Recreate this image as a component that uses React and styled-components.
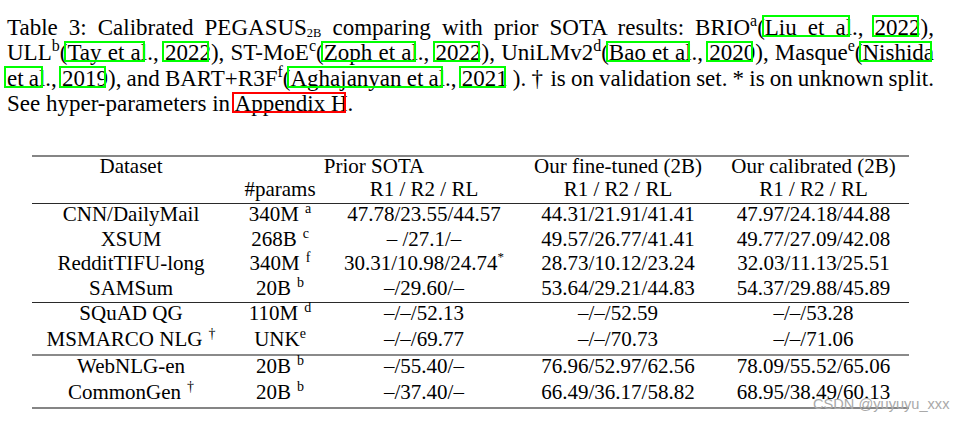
import React from "react";
import styled, { createGlobalStyle } from "styled-components";

const Global = createGlobalStyle`
  html, body {
    margin: 0;
    padding: 0;
    background: #fff;
  }
  body {
    font-family: "Liberation Serif", "Times New Roman", serif;
    color: #000;
  }
`;

const Page = styled.div`
  position: relative;
  width: 967px;
  height: 422px;
  padding: 14.5px 0 0 7px;
  box-sizing: border-box;
  overflow: hidden;
`;

const Caption = styled.div`
  width: 927px;
  font-size: 23px;
  line-height: 25.5px;
`;

const Line = styled.div`
  text-align: ${(p) => (p.last ? "left" : "justify")};
  text-align-last: ${(p) => (p.last ? "left" : "justify")};
  word-spacing: ${(p) => p.squeeze || 0}px;
`;

const Sup = styled.sup`
  font-size: ${(p) => p.size || 16}px;
  line-height: 0;
  vertical-align: ${(p) => p.raise || 9}px;
  word-spacing: 0;
  margin-left: ${(p) => p.gap || 0}px;
`;

const Sub = styled.sub`
  font-size: 12.5px;
  line-height: 0;
  vertical-align: -2px;
`;

const Cite = styled.span`
  position: relative;
  &::after {
    content: "";
    position: absolute;
    left: -3px;
    right: 2px;
    top: 0.5px;
    bottom: 3px;
    border: 2px solid ${(p) => (p.red ? "#ff0000" : "#00ff00")};
    pointer-events: none;
  }
`;

const Table = styled.table`
  margin: 38.5px 0 0 25px;
  width: 877px;
  table-layout: fixed;
  border-collapse: collapse;
  font-size: 21px;
  border-bottom: 2px solid #858585;
`;

const Head = styled.thead`
  border-top: 2px solid #858585;
  border-bottom: 1px solid #2a2a2a;
  td {
    line-height: 19px;
    padding: 0 0 4px;
  }
`;

const Section = styled.tbody`
  border-top: ${(p) => (p.soft ? "2px solid #8a8a8a" : "1px solid #2a2a2a")};
  td {
    line-height: 21px;
    padding: 0 0 ${(p) => p.pad || 3.5}px;
  }
`;

const Cell = styled.td`
  text-align: center;
  white-space: nowrap;
  vertical-align: top;
`;

const Mark = styled.span`
  position: absolute;
  left: 813px;
  top: 396px;
  font-family: "Liberation Sans", Arial, sans-serif;
  font-size: 14.6px;
  color: #a9a9a9;
  white-space: nowrap;
`;

const rows = [
  {
    rule: "hard",
    pad: 3.5,
    items: [
      ["CNN/DailyMail", "340M", "a", 6, "47.78/23.55/44.57", "", "44.31/21.91/41.41", "47.97/24.18/44.88"],
      ["XSUM", "268B", "c", 6, "– /27.1/–", "", "49.57/26.77/41.41", "49.77/27.09/42.08"],
      ["RedditTIFU-long", "340M", "f", 6, "30.31/10.98/24.74", "*", "28.73/10.12/23.24", "32.03/11.13/25.51"],
      ["SAMSum", "20B", "b", 6, "–/29.60/–", "", "53.64/29.21/44.83", "54.37/29.88/45.89"],
    ],
  },
  {
    rule: "hard",
    pad: 4.5,
    items: [
      ["SQuAD QG", "110M", "d", 6, "–/–/52.13", "", "–/–/52.59", "–/–/53.28"],
      ["MSMARCO NLG", "UNK", "e", 0, "–/–/69.77", "", "–/–/70.73", "–/–/71.06", true],
    ],
  },
  {
    rule: "soft",
    pad: 4.5,
    items: [
      ["WebNLG-en", "20B", "b", 6, "–/55.40/–", "", "76.96/52.97/62.56", "78.09/55.52/65.06"],
      ["CommonGen", "20B", "b", 6, "–/37.40/–", "", "66.49/36.17/58.82", "68.95/38.49/60.13", true],
    ],
  },
];

export default function App() {
  return (
    <Page>
      <Global />
      <Caption>
        <Line>
          Table 3: Calibrated PEGASUS<Sub>2B</Sub> comparing with prior SOTA results: BRIO
          <Sup>a</Sup>(<Cite>Liu et al</Cite>., <Cite>2022</Cite>),
        </Line>
        <Line squeeze={-1}>
          ULL<Sup>b</Sup>(<Cite>Tay et al</Cite>., <Cite>2022</Cite>), ST-MoE<Sup>c</Sup>(
          <Cite>Zoph et al</Cite>., <Cite>2022</Cite>), UniLMv2<Sup>d</Sup>(<Cite>Bao et al</Cite>.,{" "}
          <Cite>2020</Cite>), Masque<Sup>e</Sup>(<Cite>Nishida</Cite>
        </Line>
        <Line squeeze={-3}>
          <Cite>et al</Cite>., <Cite>2019</Cite>), and BART+R3F<Sup>f</Sup>(
          <Cite>Aghajanyan et al</Cite>., <Cite>2021</Cite> ). † is on validation set. * is on unknown split.
        </Line>
        <Line last>
          See hyper-parameters in <Cite red>Appendix H</Cite>.
        </Line>
      </Caption>

      <Table>
        <colgroup>
          <col style={{ width: 198 }} />
          <col style={{ width: 100 }} />
          <col style={{ width: 188 }} />
          <col style={{ width: 200 }} />
          <col style={{ width: 191 }} />
        </colgroup>
        <Head>
          <tr>
            <Cell>Dataset</Cell>
            <Cell colSpan={2}>Prior SOTA</Cell>
            <Cell>Our fine-tuned (2B)</Cell>
            <Cell>Our calibrated (2B)</Cell>
          </tr>
          <tr>
            <Cell />
            <Cell>#params</Cell>
            <Cell>R1 / R2 / RL</Cell>
            <Cell>R1 / R2 / RL</Cell>
            <Cell>R1 / R2 / RL</Cell>
          </tr>
        </Head>
        {rows.map((group, gi) => (
          <Section key={gi} soft={group.rule === "soft"} pad={group.pad}>
            {group.items.map(([name, params, note, gap, prior, star, tuned, calib, dagger]) => (
              <tr key={name}>
                <Cell>
                  {name}
                  {dagger && (
                    <Sup size={14} raise={8} gap={6}>
                      †
                    </Sup>
                  )}
                </Cell>
                <Cell>
                  {params}
                  <Sup size={14} raise={8} gap={gap}>
                    {note}
                  </Sup>
                </Cell>
                <Cell>
                  {prior}
                  {star && (
                    <Sup size={13} raise={9}>
                      {star}
                    </Sup>
                  )}
                </Cell>
                <Cell>{tuned}</Cell>
                <Cell>{calib}</Cell>
              </tr>
            ))}
          </Section>
        ))}
      </Table>
      <Mark>CSDN @yuyuyu_xxx</Mark>
    </Page>
  );
}
